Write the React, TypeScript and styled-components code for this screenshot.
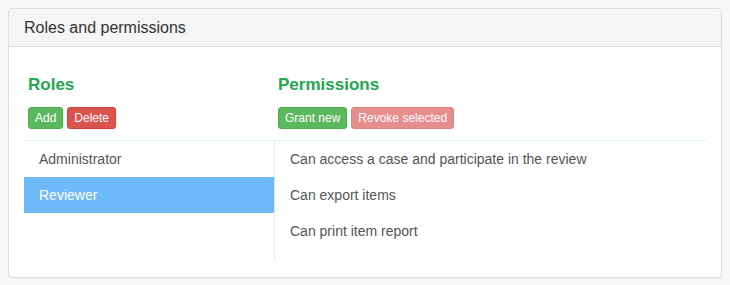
import * as React from 'react'
import styled, { createGlobalStyle } from 'styled-components'

const GlobalStyle = createGlobalStyle`
  html, body {
    margin: 0;
    background: #f8f8f8;
  }
  body {
    padding: 8px;
    font-family: 'Liberation Sans', Arial, sans-serif;
    color: #333;
  }
`

const Panel = styled.section`
  background: #fff;
  border: 1px solid #ddd;
  border-radius: 4px;
  box-shadow: 0 1px 1px rgba(0, 0, 0, 0.05);
`

const PanelHeading = styled.header`
  background: #f5f5f5;
  border-bottom: 1px solid #ddd;
  border-radius: 3px 3px 0 0;
  padding: 9px 15px 8px;
  font-size: 16px;
  line-height: 20px;
  color: #333;
`

const PanelBody = styled.div`
  padding: 15px 15px 16px;
`

const Grid = styled.div`
  display: grid;
  grid-template-columns: 250px 1fr;
`

const ColumnHead = styled.div`
  padding: 13px 4px 11px;
  border-bottom: 1px solid #dcf2ec;
`

const Heading = styled.h4`
  margin: 0 0 12px;
  font-size: 17px;
  line-height: 20px;
  font-weight: bold;
  color: #22a84f;
`

const Toolbar = styled.div`
  display: flex;
  gap: 4px;
`

const Button = styled.button<{ $tone: 'success' | 'danger'; disabled?: boolean }>`
  font-family: 'Liberation Sans', Arial, sans-serif;
  font-size: 12px;
  line-height: 18px;
  padding: 1px 6px;
  border-radius: 3px;
  color: #fff;
  cursor: pointer;
  background: ${(p) => (p.$tone === 'success' ? '#5cb85c' : '#d9534f')};
  border: 1px solid ${(p) => (p.$tone === 'success' ? '#4cae4c' : '#d43f3a')};
  opacity: ${(p) => (p.disabled ? 0.65 : 1)};
`

const List = styled.ul<{ $divided?: boolean }>`
  list-style: none;
  margin: 0;
  padding: 0 0 12px;
  border-left: ${(p) => (p.$divided ? '1px solid #dcf2ec' : 'none')};
`

const Item = styled.li<{ $active?: boolean }>`
  padding: 8px 15px;
  font-size: 14px;
  line-height: 20px;
  color: ${(p) => (p.$active ? '#fff' : '#555')};
  background: ${(p) => (p.$active ? '#6fbaf8' : 'transparent')};
`

const roles = ['Administrator', 'Reviewer']
const permissions = [
  'Can access a case and participate in the review',
  'Can export items',
  'Can print item report',
]

export default function App() {
  const [selected, setSelected] = React.useState('Reviewer')
  return (
    <>
      <GlobalStyle />
      <Panel>
        <PanelHeading>Roles and permissions</PanelHeading>
        <PanelBody>
          <Grid>
            <ColumnHead>
              <Heading>Roles</Heading>
              <Toolbar>
                <Button $tone='success'>Add</Button>
                <Button $tone='danger'>Delete</Button>
              </Toolbar>
            </ColumnHead>
            <ColumnHead>
              <Heading>Permissions</Heading>
              <Toolbar>
                <Button $tone='success'>Grant new</Button>
                <Button $tone='danger' disabled>
                  Revoke selected
                </Button>
              </Toolbar>
            </ColumnHead>
            <List>
              {roles.map((r) => (
                <Item key={r} $active={r === selected} onClick={() => setSelected(r)}>
                  {r}
                </Item>
              ))}
            </List>
            <List $divided>
              {permissions.map((p) => (
                <Item key={p}>{p}</Item>
              ))}
            </List>
          </Grid>
        </PanelBody>
      </Panel>
    </>
  )
}
